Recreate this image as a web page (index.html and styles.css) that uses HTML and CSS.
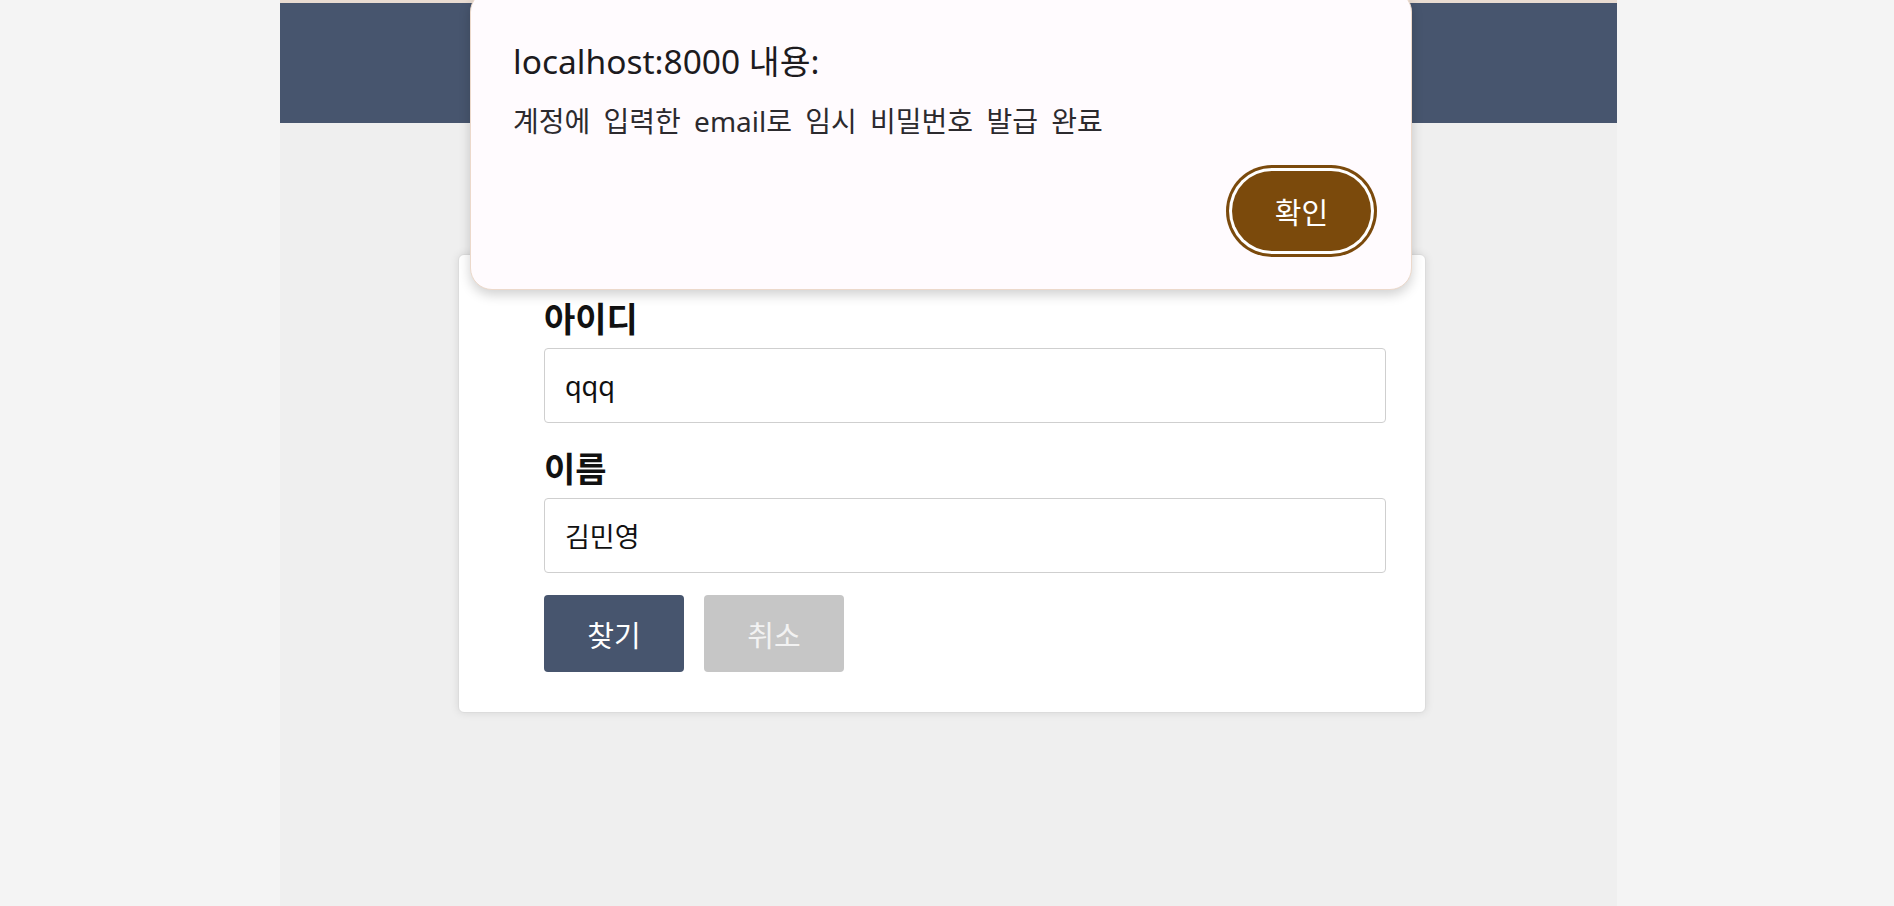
FILE: index.html
```html
<!DOCTYPE html>
<html lang="ko">
<head>
<meta charset="utf-8">
<title>비밀번호 찾기</title>
<link rel="stylesheet" href="styles.css">
</head>
<body>
<div class="page">
  <header class="topbar"></header>
  <main class="main">
    <form class="card">
      <label class="field-label" for="uid">아이디</label>
      <input class="field-input" id="uid" type="text" value="qqq">
      <label class="field-label" for="uname">이름</label>
      <input class="field-input" id="uname" type="text" value="김민영">
      <div class="actions">
        <button type="button" class="btn btn-primary">찾기</button>
        <button type="button" class="btn btn-muted">취소</button>
      </div>
    </form>
  </main>
</div>
<div class="dialog">
  <div class="dialog-title">localhost:8000 내용:</div>
  <div class="dialog-msg">계정에 입력한 email로 임시 비밀번호 발급 완료</div>
  <div class="dialog-actions">
    <button type="button" class="dialog-ok">확인</button>
  </div>
</div>
</body>
</html>
```
FILE: styles.css
```css
* { box-sizing: border-box; }
html, body { margin: 0; padding: 0; }
body {
  background: #f4f4f4;
  font-family: "Noto Sans", "Noto Sans CJK KR", sans-serif;
  color: #111;
  min-height: 906px;
  overflow: hidden;
}
.page {
  margin-left: 280px;
  width: 1337px;
  min-height: 906px;
  background: #efefef;
  border-top: 3px solid #e9dcd2;
}
.topbar {
  height: 120px;
  background: #47556e;
}
.main {
  padding-top: 131px;
  padding-left: 178px;
}
.card {
  width: 968px;
  background: #fff;
  border: 1px solid #dcdcdc;
  border-radius: 6px;
  box-shadow: 0 0 8px rgba(0, 0, 0, 0.10);
  padding: 43px 40px 40px 85px;
  display: flex;
  flex-direction: column;
}
.field-label {
  font-family: "Noto Sans CJK KR", sans-serif;
  font-weight: 700;
  font-size: 34px;
  line-height: 40px;
  color: #111;
  margin-bottom: 10px;
}
.field-input {
  height: 75px;
  width: 842px;
  border: 1px solid #cfcfcf;
  border-radius: 4px;
  padding: 0 20px;
  font-family: "Noto Sans", "Noto Sans CJK KR", sans-serif;
  font-size: 27px;
  color: #111;
  background: #fff;
  margin-bottom: 25px;
  outline: none;
}
#uname { margin-bottom: 22px; }
.actions {
  display: flex;
  gap: 20px;
}
.btn {
  width: 140px;
  height: 77px;
  border: none;
  border-radius: 4px;
  font-family: "Noto Sans CJK KR", sans-serif;
  font-size: 29px;
  color: #fff;
  padding: 0;
}
.btn-primary { background: #47556e; }
.btn-muted { background: #c6c6c6; color: #f2f2f2; }

.dialog {
  position: absolute;
  left: 470px;
  top: -10px;
  width: 942px;
  height: 300px;
  background: #fffbfe;
  border: 1px solid #ecd9cb;
  border-radius: 22px;
  box-shadow: 0 5px 12px rgba(0, 0, 0, 0.18);
  padding: 50px 40px 40px 42px;
  display: flex;
  flex-direction: column;
}
.dialog-title {
  font-size: 33.5px;
  line-height: 40px;
  color: #1d1b1e;
}
.dialog-msg {
  margin-top: 22px;
  font-size: 28px;
  line-height: 36px;
  word-spacing: 6px;
  color: #2c2a2e;
}
.dialog-actions {
  margin-top: 32px;
  display: flex;
  justify-content: flex-end;
}
.dialog-ok {
  width: 139px;
  height: 80px;
  border: none;
  border-radius: 40px;
  background: #7b4a0c;
  color: #fff;
  font-family: "Noto Sans CJK KR", sans-serif;
  font-size: 29px;
  padding: 0;
  box-shadow: 0 0 0 3px #fff, 0 0 0 6px #7b4a0c;
}
```
